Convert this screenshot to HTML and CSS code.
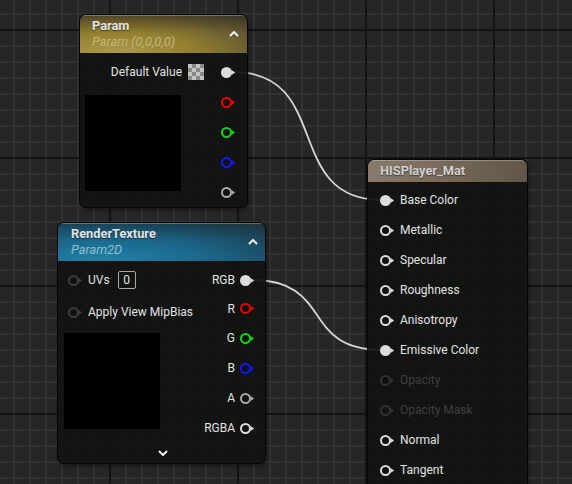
FILE: index.html
```html
<!DOCTYPE html>
<html>
<head>
<meta charset="utf-8">
<link rel="stylesheet" href="styles.css">
</head>
<body>
<div class="canvas">
  <svg class="wires" width="572" height="484" viewBox="0 0 572 484">
    <path d="M233 72 C333 72 282 200 382 200"/>
    <path d="M252 280 C334 280 300 350 382 350"/>
  </svg>

  <div class="node node-param">
    <div class="header hdr-gold">
      <div class="titles">
        <div class="title">Param</div>
        <div class="sub sub-gold">Param (0,0,0,0)</div>
      </div>
      <svg class="chev" width="10" height="6" viewBox="0 0 10 6"><polyline points="1,5 5,1 9,5"/></svg>
    </div>
    <div class="pbody">
      <div class="orow full">
        <span class="lbl">Default Value</span>
        <span class="swatch"></span>
        <svg class="pin on c-white" width="15" height="11" viewBox="0 0 15 11"><circle cx="5.5" cy="5.5" r="4.5"/><path d="M10.5 3 L14.2 5.5 L10.5 8Z"/></svg>
      </div>
      <div class="preview pv-param"></div>
      <div class="pincol">
        <div class="orow"><svg class="pin c-red" width="15" height="11" viewBox="0 0 15 11"><circle cx="5.5" cy="5.5" r="4.5"/><path d="M10.5 3 L14.2 5.5 L10.5 8Z"/></svg></div>
        <div class="orow"><svg class="pin c-green" width="15" height="11" viewBox="0 0 15 11"><circle cx="5.5" cy="5.5" r="4.5"/><path d="M10.5 3 L14.2 5.5 L10.5 8Z"/></svg></div>
        <div class="orow"><svg class="pin c-blue" width="15" height="11" viewBox="0 0 15 11"><circle cx="5.5" cy="5.5" r="4.5"/><path d="M10.5 3 L14.2 5.5 L10.5 8Z"/></svg></div>
        <div class="orow"><svg class="pin c-grey" width="15" height="11" viewBox="0 0 15 11"><circle cx="5.5" cy="5.5" r="4.5"/><path d="M10.5 3 L14.2 5.5 L10.5 8Z"/></svg></div>
      </div>
    </div>
  </div>

  <div class="node node-rt">
    <div class="header hdr-blue">
      <div class="titles">
        <div class="title">RenderTexture</div>
        <div class="sub sub-blue">Param2D</div>
      </div>
      <svg class="chev" width="10" height="6" viewBox="0 0 10 6"><polyline points="1,5 5,1 9,5"/></svg>
    </div>
    <div class="rtbody">
      <div class="incol">
        <div class="irow r-uvs">
          <svg class="pin c-dim" width="15" height="11" viewBox="0 0 15 11"><circle cx="5.5" cy="5.5" r="4.5"/><path d="M10.5 3 L14.2 5.5 L10.5 8Z"/></svg>
          <span class="lbl">UVs</span>
          <span class="numbox">0</span>
        </div>
        <div class="irow r-mip">
          <svg class="pin c-dim" width="15" height="11" viewBox="0 0 15 11"><circle cx="5.5" cy="5.5" r="4.5"/><path d="M10.5 3 L14.2 5.5 L10.5 8Z"/></svg>
          <span class="lbl">Apply View MipBias</span>
        </div>
        <div class="preview pv-rt"></div>
      </div>
      <div class="outcol">
        <div class="orow r28"><span class="lbl">RGB</span><svg class="pin on c-white" width="15" height="11" viewBox="0 0 15 11"><circle cx="5.5" cy="5.5" r="4.5"/><path d="M10.5 3 L14.2 5.5 L10.5 8Z"/></svg></div>
        <div class="orow r29"><span class="lbl">R</span><svg class="pin c-red" width="15" height="11" viewBox="0 0 15 11"><circle cx="5.5" cy="5.5" r="4.5"/><path d="M10.5 3 L14.2 5.5 L10.5 8Z"/></svg></div>
        <div class="orow"><span class="lbl">G</span><svg class="pin c-green" width="15" height="11" viewBox="0 0 15 11"><circle cx="5.5" cy="5.5" r="4.5"/><path d="M10.5 3 L14.2 5.5 L10.5 8Z"/></svg></div>
        <div class="orow"><span class="lbl">B</span><svg class="pin c-blue" width="15" height="11" viewBox="0 0 15 11"><circle cx="5.5" cy="5.5" r="4.5"/><path d="M10.5 3 L14.2 5.5 L10.5 8Z"/></svg></div>
        <div class="orow"><span class="lbl">A</span><svg class="pin c-grey" width="15" height="11" viewBox="0 0 15 11"><circle cx="5.5" cy="5.5" r="4.5"/><path d="M10.5 3 L14.2 5.5 L10.5 8Z"/></svg></div>
        <div class="orow"><span class="lbl">RGBA</span><svg class="pin c-white" width="15" height="11" viewBox="0 0 15 11"><circle cx="5.5" cy="5.5" r="4.5"/><path d="M10.5 3 L14.2 5.5 L10.5 8Z"/></svg></div>
      </div>
    </div>
    <div class="footer">
      <svg class="chev" width="10" height="6" viewBox="0 0 10 6"><polyline points="1,1 5,5 9,1"/></svg>
    </div>
  </div>

  <div class="node node-mat">
    <div class="header hdr-brown">
      <div class="title title-mat">HISPlayer_Mat</div>
    </div>
    <div class="matbody">
      <div class="irow"><svg class="pin on c-white" width="15" height="11" viewBox="0 0 15 11"><circle cx="5.5" cy="5.5" r="4.5"/><path d="M10.5 3 L14.2 5.5 L10.5 8Z"/></svg><span class="lbl">Base Color</span></div>
      <div class="irow"><svg class="pin c-white" width="15" height="11" viewBox="0 0 15 11"><circle cx="5.5" cy="5.5" r="4.5"/><path d="M10.5 3 L14.2 5.5 L10.5 8Z"/></svg><span class="lbl">Metallic</span></div>
      <div class="irow"><svg class="pin c-white" width="15" height="11" viewBox="0 0 15 11"><circle cx="5.5" cy="5.5" r="4.5"/><path d="M10.5 3 L14.2 5.5 L10.5 8Z"/></svg><span class="lbl">Specular</span></div>
      <div class="irow"><svg class="pin c-white" width="15" height="11" viewBox="0 0 15 11"><circle cx="5.5" cy="5.5" r="4.5"/><path d="M10.5 3 L14.2 5.5 L10.5 8Z"/></svg><span class="lbl">Roughness</span></div>
      <div class="irow"><svg class="pin c-white" width="15" height="11" viewBox="0 0 15 11"><circle cx="5.5" cy="5.5" r="4.5"/><path d="M10.5 3 L14.2 5.5 L10.5 8Z"/></svg><span class="lbl">Anisotropy</span></div>
      <div class="irow"><svg class="pin on c-white" width="15" height="11" viewBox="0 0 15 11"><circle cx="5.5" cy="5.5" r="4.5"/><path d="M10.5 3 L14.2 5.5 L10.5 8Z"/></svg><span class="lbl">Emissive Color</span></div>
      <div class="irow dim"><svg class="pin c-dark" width="15" height="11" viewBox="0 0 15 11"><circle cx="5.5" cy="5.5" r="4.5"/><path d="M10.5 3 L14.2 5.5 L10.5 8Z"/></svg><span class="lbl">Opacity</span></div>
      <div class="irow dim"><svg class="pin c-dark" width="15" height="11" viewBox="0 0 15 11"><circle cx="5.5" cy="5.5" r="4.5"/><path d="M10.5 3 L14.2 5.5 L10.5 8Z"/></svg><span class="lbl">Opacity Mask</span></div>
      <div class="irow"><svg class="pin c-white" width="15" height="11" viewBox="0 0 15 11"><circle cx="5.5" cy="5.5" r="4.5"/><path d="M10.5 3 L14.2 5.5 L10.5 8Z"/></svg><span class="lbl">Normal</span></div>
      <div class="irow"><svg class="pin c-white" width="15" height="11" viewBox="0 0 15 11"><circle cx="5.5" cy="5.5" r="4.5"/><path d="M10.5 3 L14.2 5.5 L10.5 8Z"/></svg><span class="lbl">Tangent</span></div>
    </div>
  </div>
</div>
</body>
</html>
```

FILE: styles.css
```css
html, body {
  margin: 0;
  padding: 0;
}

body {
  width: 572px;
  height: 484px;
  overflow: hidden;
  font-family: Roboto, "DejaVu Sans", sans-serif;
  font-size: 12px;
  color: #e2e2e2;
}

.canvas {
  position: relative;
  width: 572px;
  height: 484px;
  overflow: hidden;
  background-color: #262626;
  background-image:
    linear-gradient(to right, #131313 0 2px, transparent 2px),
    linear-gradient(to bottom, #131313 0 2px, transparent 2px),
    linear-gradient(to right, #333333 0 2px, transparent 2px),
    linear-gradient(to bottom, #333333 0 2px, transparent 2px);
  background-size: 128px 128px, 128px 128px, 16px 16px, 16px 16px;
  background-position: 109px 0, 0 29px, 13px 0, 0 13px;
}

.wires {
  position: absolute;
  left: 0;
  top: 0;
}

.wires path {
  fill: none;
  stroke: #d6d6d6;
  stroke-width: 1.8;
}

/* nodes */
.node {
  position: absolute;
  display: flex;
  flex-direction: column;
  border-radius: 6px;
  overflow: hidden;
  background: rgba(17, 19, 17, 0.93);
  box-shadow: 0 0 0 1px #050505, 2px 3px 5px rgba(0, 0, 0, 0.45);
}

.node-param {
  left: 80px;
  top: 15px;
  width: 167px;
  height: 192px;
}

.node-rt {
  left: 58px;
  top: 223px;
  width: 207px;
  height: 240px;
}

.node-mat {
  left: 368px;
  top: 160px;
  width: 159px;
  height: 340px;
}

/* headers */
.header {
  display: flex;
  align-items: center;
  justify-content: space-between;
  box-sizing: border-box;
  box-shadow: inset 0 1px 0 rgba(255, 255, 255, 0.28);
  flex: none;
}

.hdr-gold {
  height: 38px;
  padding: 0 8px 0 12px;
  background:
    linear-gradient(to bottom, rgba(0, 0, 0, 0.2), rgba(0, 0, 0, 0) 45%),
    radial-gradient(130% 150% at 22% 100%, #ad9a4b 0%, #94812f 35%, #625630 68%, #36352f 100%);
}

.hdr-blue {
  height: 38px;
  padding: 0 7px 0 13px;
  background:
    linear-gradient(to bottom, rgba(0, 0, 0, 0.12), rgba(0, 0, 0, 0) 45%),
    radial-gradient(130% 150% at 22% 100%, #2281ab 0%, #1c6a8f 35%, #1b4a5f 68%, #252e33 100%);
}

.hdr-brown {
  height: 22px;
  padding: 0 12px;
  background: linear-gradient(to right, #8a7a6b 0%, #776857 50%, #625548 100%);
}

.titles {
  display: flex;
  flex-direction: column;
}

.title {
  font-size: 12.8px;
  font-weight: bold;
  line-height: 16px;
  color: #e4e4e4;
  text-shadow: 0 1px 1px rgba(0, 0, 0, 0.5);
}

.title-mat {
  color: #d0d0d0;
}

.sub {
  font-size: 12.8px;
  font-style: italic;
  line-height: 16px;
}

.sub-gold {
  color: #c3b47c;
}

.sub-blue {
  color: #8fc0c8;
}

.chev {
  flex: none;
}

.chev polyline {
  fill: none;
  stroke: #f2f2f2;
  stroke-width: 2;
}

/* pins */
.pin {
  flex: none;
  display: block;
}

.pin circle {
  fill: #101110;
  stroke: currentColor;
  stroke-width: 2;
}

.pin path {
  fill: currentColor;
}

.pin.on circle {
  fill: currentColor;
}

.c-white { color: #dcdcdc; }
.c-red { color: #ee0000; }
.c-green { color: #12d512; }
.c-blue { color: #1414ff; }
.c-grey { color: #a8a8a8; }
.c-dim { color: #3c3c3c; }
.c-dark { color: #323232; }

/* rows */
.orow {
  display: flex;
  align-items: center;
  justify-content: flex-end;
  height: 30px;
  gap: 5px;
}

.irow {
  display: flex;
  align-items: center;
  height: 30px;
  gap: 5px;
}

.lbl {
  white-space: nowrap;
}

/* param body */
.pbody {
  display: grid;
  grid-template-columns: 1fr auto;
  padding-top: 4px;
}

.pbody .orow {
  padding-right: 11px;
}

.full {
  grid-column: 1 / 3;
}

.full .lbl {
  margin-right: 1px;
}

.swatch {
  width: 16px;
  height: 16px;
  margin-right: 12px;
  background-color: #c4c4c4;
  background-image:
    linear-gradient(45deg, #8a8a8a 25%, transparent 25%, transparent 75%, #8a8a8a 75%),
    linear-gradient(45deg, #8a8a8a 25%, transparent 25%, transparent 75%, #8a8a8a 75%);
  background-size: 8px 8px;
  background-position: 0 0, 4px 4px;
}

.preview {
  background: #000;
  width: 96px;
  height: 96px;
}

.pv-param {
  margin: 8px 0 0 5px;
}

/* render texture body */
.rtbody {
  display: flex;
  justify-content: space-between;
  padding-top: 5px;
  height: 177px;
}

.incol {
  display: flex;
  flex-direction: column;
}

.incol .irow {
  padding-left: 10px;
}

.r-uvs {
  height: 28px;
}

.r-mip {
  margin-top: 3px;
}

.numbox {
  box-sizing: border-box;
  width: 18px;
  height: 18px;
  margin-left: 3px;
  border: 1px solid #a9a9a9;
  border-radius: 2px;
  display: flex;
  align-items: center;
  justify-content: center;
  line-height: 1;
}

.pv-rt {
  margin: 6px 0 0 6px;
}

.outcol {
  display: flex;
  flex-direction: column;
  padding-right: 10px;
}

.r28 { height: 28px; }
.r29 { height: 29px; }

.footer {
  height: 20px;
  display: flex;
  align-items: center;
  justify-content: center;
  padding-left: 2px;
}

/* material body */
.matbody {
  display: flex;
  flex-direction: column;
  padding: 3px 0 0 12px;
}

.dim .lbl {
  color: #3e3e3e;
}
```
